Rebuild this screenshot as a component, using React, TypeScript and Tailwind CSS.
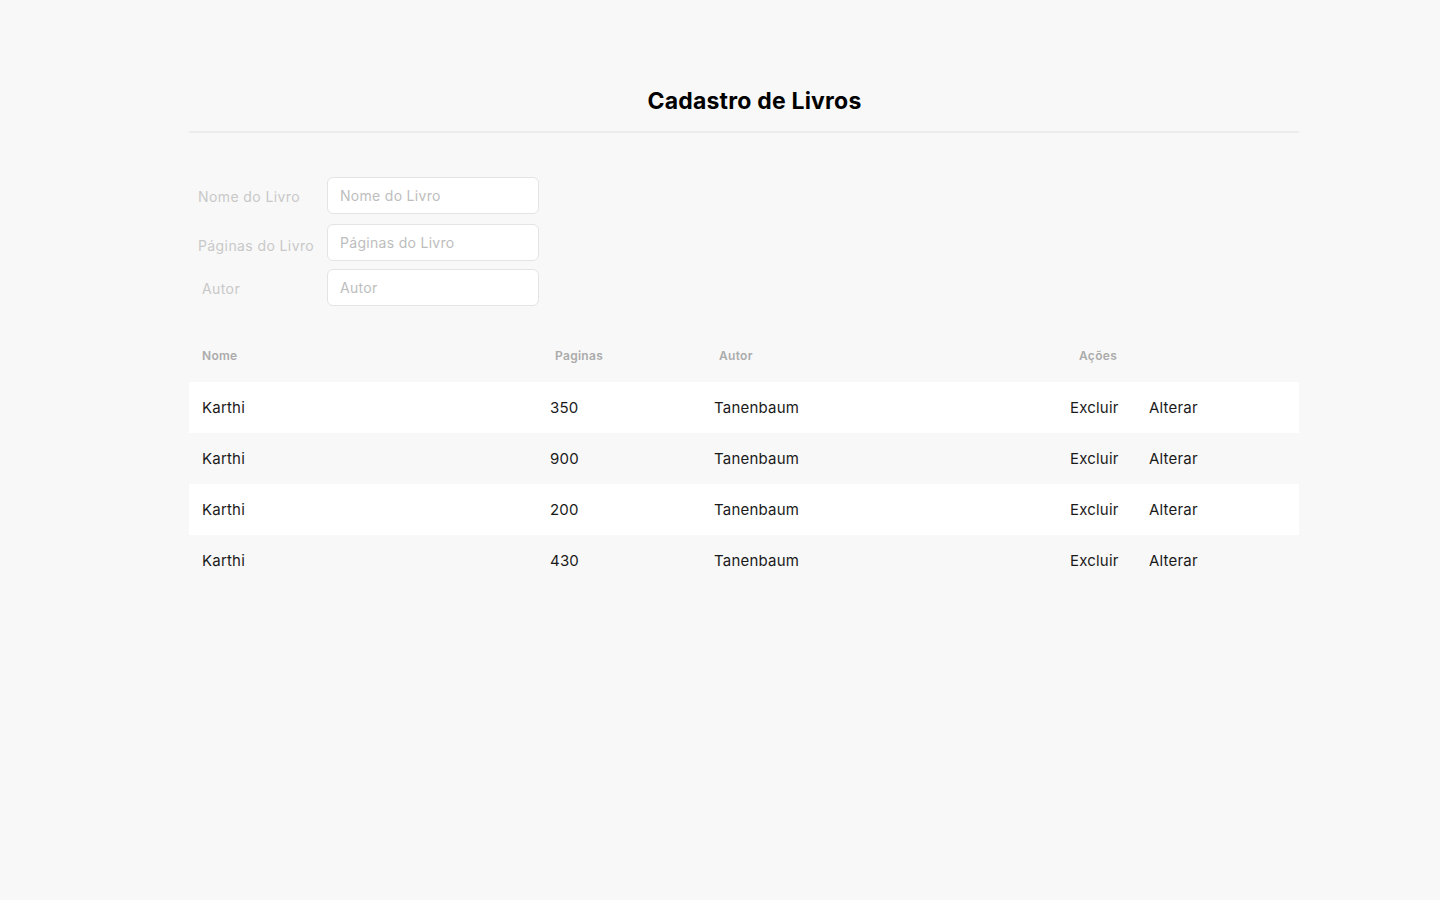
const books = [
  { nome: 'Karthi', paginas: 350, autor: 'Tanenbaum' },
  { nome: 'Karthi', paginas: 900, autor: 'Tanenbaum' },
  { nome: 'Karthi', paginas: 200, autor: 'Tanenbaum' },
  { nome: 'Karthi', paginas: 430, autor: 'Tanenbaum' },
]

const font = { fontFamily: 'Inter, "Noto Sans", sans-serif' }

function Field({ label, labelClass }: { label: string; labelClass: string }) {
  return (
    <div className="flex items-center">
      <label className={`w-[138px] text-[14px] tracking-[0.4px] text-[#c8c8c8] ${labelClass}`}>{label}</label>
      <input
        placeholder={label}
        className="w-[212px] h-[37px] rounded-[6px] border border-[#e4e4e4] bg-white px-[12px] text-[14px] tracking-[0.3px] outline-none placeholder:text-[#bdbdbd]"
      />
    </div>
  )
}

export default function App() {
  return (
    <div className="min-h-[900px] bg-[#f8f8f8]" style={font}>
      <div className="ml-[189px] w-[1110px] pt-[87px]">
        <h1 className="pl-[21px] text-center text-[23px] font-bold leading-[28px] tracking-[0.2px] text-black">Cadastro de Livros</h1>
        <div className="mt-[16px] h-[2px] bg-[#ececec]" />

        <div className="mt-[44px] flex flex-col">
          <Field label="Nome do Livro" labelClass="pl-[9px] pt-[2px]" />
          <div className="h-[10px]" />
          <Field label="Páginas do Livro" labelClass="pl-[9px] pt-[6px]" />
          <div className="h-[8px]" />
          <Field label="Autor" labelClass="pl-[13px] pt-[2px]" />
        </div>

        <div className="mt-[39px]">
          <div className="grid h-[22px] grid-cols-[348px_164px_356px_79px_1fr] items-center pl-[13px] text-[12px] font-semibold tracking-[0.3px] text-[#ababab]">
            <span>Nome</span>
            <span className="pl-[5px]">Paginas</span>
            <span className="pl-[5px]">Autor</span>
            <span className="pl-[9px]">Ações</span>
            <span />
          </div>
          <div className="mt-[15px]">
            {books.map((b, i) => (
              <div
                key={i}
                className={`grid h-[51px] grid-cols-[348px_164px_356px_79px_1fr] items-center pl-[13px] pt-[2px] text-[15px] tracking-[0.2px] text-[#1a1a1a] ${
                  i % 2 === 0 ? 'bg-white' : ''
                }`}
              >
                <span>{b.nome}</span>
                <span>{b.paginas}</span>
                <span>{b.autor}</span>
                <span className="cursor-pointer">Excluir</span>
                <span className="cursor-pointer">Alterar</span>
              </div>
            ))}
          </div>
        </div>
      </div>
    </div>
  )
}
